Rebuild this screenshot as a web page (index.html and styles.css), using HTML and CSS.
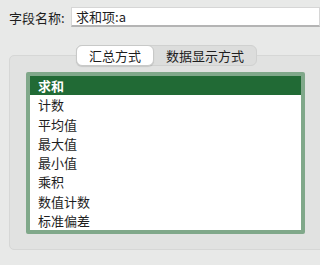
FILE: index.html
```html
<!DOCTYPE html>
<html lang="zh">
<head>
    <meta charset="UTF-8">
    <title>字段设置</title>
    <link rel="stylesheet" href="styles.css">
</head>
<body>
    <div class="field-row">
        <label class="field-label" for="fieldName">字段名称:</label>
        <input class="field-input" type="text" id="fieldName" value="求和项:a">
    </div>
    <div class="tabs">
        <div class="tab active">汇总方式</div>
        <div class="tab">数据显示方式</div>
    </div>
    <div class="panel">
        <ul class="list">
            <li class="selected">求和</li>
            <li>计数</li>
            <li>平均值</li>
            <li>最大值</li>
            <li>最小值</li>
            <li>乘积</li>
            <li>数值计数</li>
            <li>标准偏差</li>
        </ul>
    </div>
</body>
</html>
```
FILE: styles.css
```css
body {
    margin: 0;
    padding: 0;
    background-color: #e8e9e8;
    font-family: "Noto Sans CJK SC", "Liberation Sans", sans-serif;
    font-size: 13px;
    color: #1e1e1e;
    overflow: hidden;
    width: 320px;
    height: 265px;
}
.field-row {
    display: flex;
    align-items: center;
    padding: 7px 0 0 9px;
    height: 20px;
}
.field-label {
    width: 65px;
}
.field-input {
    box-sizing: border-box;
    width: 260px;
    height: 20px;
    margin: 0;
    padding: 0 4px;
    border: 1px solid #d6d6d6;
    border-bottom: 2px solid #b4b4b4;
    background: white;
    font: inherit;
    color: #1e1e1e;
    outline: none;
}
.tabs {
    display: flex;
    margin: 18px 0 0 76px;
    width: 181px;
    height: 21px;
    background-color: #dcdddc;
    border: 1px solid #d0d1d0;
    border-radius: 6px;
    box-sizing: border-box;
    position: relative;
    z-index: 1;
}
.tab {
    display: flex;
    align-items: center;
    justify-content: center;
    font-size: 13px;
    line-height: 1;
}
.tab:first-child {
    width: 76px;
}
.tab:last-child {
    flex: 1;
}
.tab.active {
    background-color: white;
    border-radius: 6px;
    margin: -1px 0 -1px -1px;
    border: 1px solid #c8c9c8;
    box-shadow: 0 1px 1px rgba(0, 0, 0, 0.12);
}
.panel {
    margin: -11px 0 0 9px;
    width: 320px;
    height: 195px;
    box-sizing: border-box;
    background-color: #e1e2e1;
    border: 1px solid #d6d7d6;
    border-radius: 5px;
    padding: 16px 0 0 16px;
}
.list {
    list-style: none;
    margin: 0;
    padding: 0;
    width: 279px;
    height: 162px;
    box-sizing: border-box;
    border: 4px solid #80a88a;
    border-radius: 2px;
    background: white;
    overflow: hidden;
}
.list li {
    height: 19.25px;
    line-height: 19.25px;
    padding-left: 8px;
}
.list li.selected {
    background-color: #216a35;
    color: white;
    font-weight: bold;
}
```
